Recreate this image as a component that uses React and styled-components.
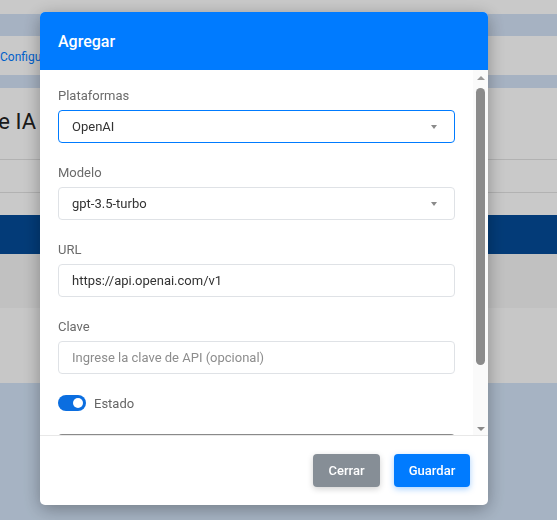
import React, { useState } from 'react';
import styled, { createGlobalStyle } from 'styled-components';

const GlobalStyle = createGlobalStyle`
  html, body {
    margin: 0;
    padding: 0;
    height: 100%;
    overflow: hidden;
    font-family: Roboto, "Liberation Sans", Arial, sans-serif;
  }
  #root {
    height: 100%;
  }
`;

const Page = styled.div`
  height: 520px;
  display: flex;
  flex-direction: column;
  background: #ffffff;
`;

const Band = styled.div`
  height: ${(p) => p.h}px;
  flex-shrink: 0;
  background: ${(p) => p.bg || '#ffffff'};
  border-bottom: ${(p) => (p.line ? '1px solid #e2e2e2' : 'none')};
`;

const Breadcrumb = styled.div`
  height: 39px;
  display: flex;
  align-items: center;
  padding-top: 2px;
  box-sizing: border-box;
  font-size: 12px;
  color: #007bff;
`;

const TitleSection = styled.div`
  height: 72px;
  padding-top: 21px;
  box-sizing: border-box;
  border-bottom: 1px solid #e2e2e2;
`;

const TitleClip = styled.div`
  width: 36px;
  display: flex;
  justify-content: flex-end;
  overflow: hidden;
  white-space: nowrap;
`;

const PageTitle = styled.h1`
  margin: 0;
  font-size: 22px;
  line-height: 26px;
  font-weight: 400;
  color: #222;
`;

const Fill = styled.div`
  flex: 1;
  background: #d3e4f8;
`;

const Backdrop = styled.div`
  position: fixed;
  inset: 0;
  background: rgba(0, 0, 0, 0.21);
  padding: 12px 0 0 40px;
`;

const Modal = styled.div`
  width: 448px;
  height: 493px;
  display: flex;
  flex-direction: column;
  background: #fff;
  border-radius: 5px;
  overflow: hidden;
  box-shadow: 0 4px 18px rgba(0, 0, 0, 0.32);
`;

const Header = styled.div`
  height: 58px;
  flex-shrink: 0;
  background: #007bff;
  display: flex;
  align-items: center;
  padding: 0 18px;
  color: #fff;
  font-size: 16px;
  font-weight: 500;
`;

const Body = styled.div`
  flex: 1;
  min-height: 0;
  display: flex;
  background: #fff;
`;

const Viewport = styled.div`
  flex: 1;
  overflow: hidden;
`;

const ScrollBar = styled.div`
  width: 15px;
  flex-shrink: 0;
  display: flex;
  flex-direction: column;
  background: #fafafa;
`;

const ArrowButton = styled.div`
  height: 15px;
  display: flex;
  align-items: center;
  justify-content: center;

  &::before {
    content: '';
    width: 0;
    height: 0;
    border-left: 4px solid transparent;
    border-right: 4px solid transparent;
    ${(p) =>
      p.up
        ? 'border-bottom: 4px solid #9a9a9a; margin-top: 0px;'
        : 'border-top: 4px solid #8a8a8a; margin-top: 2px;'}
  }
`;

const Track = styled.div`
  flex: 1;
  padding: 3px;
`;

const Thumb = styled.div`
  width: 100%;
  border-radius: 5px;
  background: #8b8b8b;
`;

const Content = styled.div`
  padding: 17px 18px;
`;

const Group = styled.div`
  margin-bottom: 21px;
`;

const Label = styled.label`
  display: block;
  font-size: 13px;
  line-height: 18px;
  color: #6b6b6b;
  margin-bottom: 5px;
`;

const Control = styled.div`
  height: 33px;
  box-sizing: border-box;
  border: 1px solid ${(p) => (p.focused ? '#007bff' : '#dfe2e6')};
  border-radius: 4px;
  background: #fff;
  display: flex;
  align-items: center;
  padding: 0 13px;
  font-size: 13px;
  color: ${(p) => (p.placeholder ? '#8d8d8d' : '#333')};
`;

const Caret = styled.span`
  margin-left: auto;
  margin-right: 4px;
  width: 0;
  height: 0;
  border-left: 3.5px solid transparent;
  border-right: 3.5px solid transparent;
  border-top: 4px solid #8a8a8a;
`;

const SwitchRow = styled.div`
  display: flex;
  align-items: center;
  height: 16px;
  gap: 8px;
  margin-bottom: 23px;
  font-size: 13px;
  color: #666;
`;

const Switch = styled.button`
  width: 28px;
  height: 16px;
  border: none;
  border-radius: 8px;
  background: ${(p) => (p.on ? '#0b6ee0' : '#ccc')};
  display: flex;
  align-items: center;
  justify-content: ${(p) => (p.on ? 'flex-end' : 'flex-start')};
  padding: 0 3px;
  box-sizing: border-box;
  cursor: pointer;
`;

const Knob = styled.span`
  width: 10px;
  height: 10px;
  border-radius: 50%;
  background: #fff;
`;

const Notes = styled.div`
  height: 60px;
  box-sizing: border-box;
  border: 1px solid #e0e0e0;
  border-top-color: #8a8a8a;
  border-radius: 4px;
`;

const Footer = styled.div`
  height: 70px;
  flex-shrink: 0;
  box-sizing: border-box;
  border-top: 1px solid #e8e8e8;
  display: flex;
  align-items: center;
  justify-content: flex-end;
  gap: 14px;
  padding: 0 18px;
`;

const Button = styled.button`
  height: 33px;
  width: ${(p) => p.w}px;
  border: none;
  border-radius: 4px;
  background: ${(p) => p.bg};
  color: #fff;
  font-family: inherit;
  font-size: 13px;
  font-weight: 500;
  box-shadow: 0 2px 6px ${(p) => p.glow};
  cursor: pointer;
`;

// visible part of the form vs its full height
const VISIBLE = 365;
const CONTENT = 434;

const App = () => {
  const [estado, setEstado] = useState(true);
  const thumb = ((VISIBLE / CONTENT) * 100).toFixed(1);

  return (
    <>
      <GlobalStyle />
      <Page>
        <Band h={14} />
        <Band h={22} bg="#d3e2f6" />
        <Breadcrumb>Configuración</Breadcrumb>
        <Band h={13} bg="#d3e2f6" />
        <TitleSection>
          <TitleClip>
            <PageTitle>Proveedores de IA</PageTitle>
          </TitleClip>
        </TitleSection>
        <Band h={32} line />
        <Band h={22} />
        <Band h={39} bg="#044c99" />
        <Band h={54} bg="#f5f5f5" />
        <Band h={75} bg="#fdfdfd" />
        <Fill />
      </Page>

      <Backdrop>
        <Modal>
          <Header>Agregar</Header>
          <Body>
            <Viewport>
              <Content>
                <Group>
                  <Label>Plataformas</Label>
                  <Control focused>
                    OpenAI
                    <Caret />
                  </Control>
                </Group>
                <Group>
                  <Label>Modelo</Label>
                  <Control>
                    gpt-3.5-turbo
                    <Caret />
                  </Control>
                </Group>
                <Group>
                  <Label>URL</Label>
                  <Control>https://api.openai.com/v1</Control>
                </Group>
                <Group>
                  <Label>Clave</Label>
                  <Control placeholder>Ingrese la clave de API (opcional)</Control>
                </Group>
                <SwitchRow>
                  <Switch on={estado} onClick={() => setEstado(!estado)}>
                    <Knob />
                  </Switch>
                  Estado
                </SwitchRow>
                <Notes />
              </Content>
            </Viewport>
            <ScrollBar>
              <ArrowButton up />
              <Track>
                <Thumb style={{ height: `${thumb}%` }} />
              </Track>
              <ArrowButton />
            </ScrollBar>
          </Body>
          <Footer>
            <Button w={67} bg="#868e96" glow="rgba(0,0,0,0.18)">Cerrar</Button>
            <Button w={76} bg="#007bff" glow="rgba(0,123,255,0.35)">Guardar</Button>
          </Footer>
        </Modal>
      </Backdrop>
    </>
  );
};

export default App;
